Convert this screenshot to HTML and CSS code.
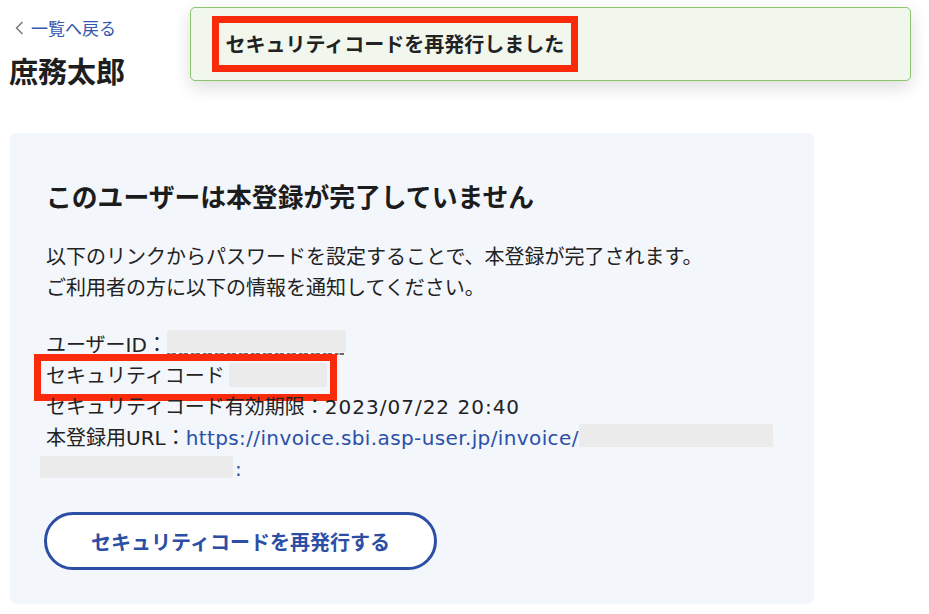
FILE: index.html
```html
<!DOCTYPE html>
<html lang="ja">
<head>
<meta charset="utf-8">
<title>庶務太郎</title>
<link rel="stylesheet" href="styles.css">
</head>
<body>
<div class="page">
  <a class="back" href="#">
    <svg class="chev" width="10" height="14" viewBox="0 0 10 14"><polyline points="8,1.5 2.5,7 8,12.5" fill="none" stroke="#7a7a7a" stroke-width="1.6" stroke-linecap="round" stroke-linejoin="round"/></svg>
    <span>一覧へ戻る</span>
  </a>
  <h1 class="title">庶務太郎</h1>

  <section class="card">
    <h2 class="card-title">このユーザーは本登録が完了していません</h2>
    <p class="lead">以下のリンクからパスワードを設定することで、本登録が完了されます。<br>ご利用者の方に以下の情報を通知してください。</p>
    <div class="info">
      <div class="row">ユーザーID：<span class="mask mask-id"></span></div>
      <div class="row row-code">セキュリティコード<span class="mask mask-code"></span><span class="annot annot-code"></span></div>
      <div class="row">セキュリティコード有効期限：<span class="latin date">2023/07/22 20:40</span></div>
      <div class="row">本登録用URL：<a class="url latin" href="#">https://invoice.sbi.asp-user.jp/invoice/<span class="mask mask-url"></span><br><span class="mask mask-url2"></span>:</a></div>
    </div>
    <button class="reissue" type="button">セキュリティコードを再発行する</button>
  </section>

  <div class="toast">
    <p class="toast-msg">セキュリティコードを再発行しました</p>
  </div>
</div>
</body>
</html>
```

FILE: styles.css
```css
* { box-sizing: border-box; }
html, body { margin: 0; padding: 0; background: #fff; }
body {
  font-family: "DejaVu Sans", "Noto Sans CJK JP", sans-serif;
  color: #222;
  width: 929px;
  height: 614px;
  overflow: hidden;
}
.page {
  position: relative;
  padding: 16px 0 0 10px;
}
.back {
  display: flex;
  align-items: center;
  gap: 7px;
  height: 24px;
  padding-left: 4px;
  color: #3557b0;
  text-decoration: none;
  font-family: "Noto Sans CJK JP", sans-serif;
  font-size: 17px;
  line-height: 24px;
}
.chev { display: block; }
.title {
  margin: 10px 0 0 -1px;
  font-family: "Noto Sans CJK JP", sans-serif;
  font-weight: 700;
  font-size: 29px;
  line-height: 40px;
  color: #1e1e1e;
}
.card {
  margin-top: 43px;
  width: 804px;
  background: #f3f6fb;
  border-radius: 6px;
  padding: 43px 36px 34px;
}
.card-title {
  margin: 0;
  font-family: "Noto Sans CJK JP", sans-serif;
  font-weight: 700;
  font-size: 25.8px;
  line-height: 40px;
  color: #1c1c1c;
}
.lead {
  margin: 24px 0 0;
  font-size: 20px;
  line-height: 31px;
  font-family: "Noto Sans CJK JP", sans-serif;
}
.info {
  margin-top: 28px;
  font-size: 20px;
  line-height: 31px;
}
.row { position: relative; white-space: nowrap; }
.latin { font-family: "DejaVu Sans", "Noto Sans CJK JP", sans-serif; }
.date { letter-spacing: 1px; }
.url { color: #2c4fa8; text-decoration: none; letter-spacing: 0.38px; }
.mask {
  display: inline-block;
  vertical-align: top;
  background: #ebebeb;
  border-radius: 2px;
}
.mask-id {
  width: 179px;
  height: 25px;
  background:
    linear-gradient(#ebebeb, #ebebeb) top / 100% 22px no-repeat,
    repeating-linear-gradient(90deg, #6a6a6a 0 3px, #b5b5b5 3px 5px, #6a6a6a 5px 9px, transparent 9px 12px) bottom / 100% 2.5px no-repeat;
}
.mask-code { width: 98px; height: 24px; margin: 2px 0 0 4px; }
.mask-url { width: 194px; height: 23px; margin-top: 1px; }
.mask-url2 { width: 193px; height: 22px; margin: 2px 2px 0 -6px; }
.annot {
  position: absolute;
  border: 7px solid #fa2b0a;
  pointer-events: none;
}
.annot-code { left: -12px; top: -7px; width: 303px; height: 47px; }
.reissue {
  display: block;
  margin: 27px 0 0 -2px;
  width: 393px;
  height: 58px;
  border: 3px solid #2c4ea5;
  border-radius: 29px;
  background: #fff;
  color: #2c4ea5;
  font-family: "Noto Sans CJK JP", sans-serif;
  font-weight: 700;
  font-size: 20px;
  cursor: pointer;
}
.toast {
  position: absolute;
  left: 190px;
  top: 7px;
  width: 721px;
  height: 74px;
  background: #f1f7ed;
  border: 1.5px solid #8dc56e;
  border-radius: 5px;
  box-shadow: 0 6px 18px rgba(0,0,0,0.14);
  padding: 7.5px 20.5px;
}
.toast-msg {
  display: inline-block;
  margin: 0;
  height: 56px;
  border: 7px solid #fa2b0a;
  padding: 0 7px;
  font-family: "Noto Sans CJK JP", sans-serif;
  font-weight: 700;
  font-size: 20px;
  line-height: 42px;
  color: #222;
}
```
